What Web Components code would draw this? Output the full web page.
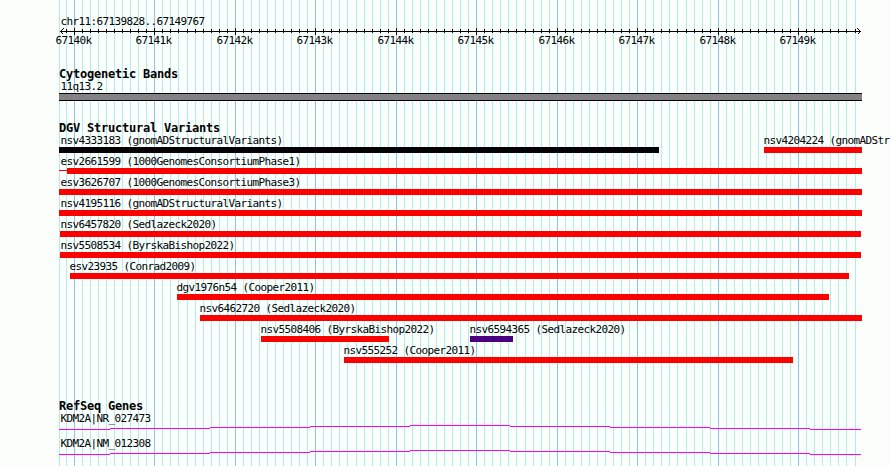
<!DOCTYPE html>
<html lang="en">
<head>
<meta charset="utf-8">
<title>chr11:67139828..67149767</title>
<style>
  html, body { margin: 0; padding: 0; background: #fcfefc; }
</style>
</head>
<body>
<genome-browser></genome-browser>

<script>
const START = 67139828;
const STOP = 67149767;
const PAD = 60;
const WIDTH = 800;
const toPx = bp => Math.round(PAD + (bp - START) * WIDTH / (STOP - START + 1));

// every 100 bp, major each 1000 bp
const TICKS = [];
for (let bp = Math.ceil(START / 100) * 100; bp <= STOP; bp += 100) {
  TICKS.push({ bp, x: toPx(bp), major: bp % 1000 === 0 });
}

class GridLines extends HTMLElement {
  constructor() {
    super();
    this.attachShadow({ mode: 'open' });
    const lines = TICKS.map(t =>
      `<rect x="${t.x}" y="0" width="1" height="466" fill="${t.major ? '#84caec' : '#acf0ec'}"/>`).join('');
    this.shadowRoot.innerHTML = `
      <style>
        :host { display: block; }
        svg { display: block; }
      </style>
      <svg width="890" height="466" shape-rendering="crispEdges">
        <rect x="59" y="0" width="1" height="466" fill="#acf0ec"/>${lines}
      </svg>
    `;
  }
}
customElements.define('grid-lines', GridLines);

class ScaleRuler extends HTMLElement {
  constructor() {
    super();
    this.attachShadow({ mode: 'open' });
    const ticks = TICKS.map(t => t.major
      ? `<rect x="${t.x}" y="0" width="1" height="7"/>`
      : `<rect x="${t.x}" y="1" width="1" height="4"/>`).join('');
    const labels = TICKS.filter(t => t.major).map(t =>
      `<span style="margin-left:${t.x - 18.5}px">${t.bp / 1000}k</span>`).join('');
    this.shadowRoot.innerHTML = `
      <style>
        :host { display: block; height: 68px; }
        .region { padding: 14px 0 0 60.5px; height: 14px; line-height: 16px; }
        svg { display: block; }
        .labels { display: grid; height: 12px; line-height: 12px; }
        .labels span { grid-area: 1 / 1; }
      </style>
      <div class="region"><slot></slot></div>
      <svg width="890" height="7" shape-rendering="crispEdges">
        <rect x="60" y="3" width="801" height="1"/>${ticks}
        <path d="M63.5 0.5L60.5 3.5L63.5 6.5M857.5 0.5L860.5 3.5L857.5 6.5" fill="none" stroke="#000"/>
      </svg>
      <div class="labels">${labels}</div>
    `;
  }
}
customElements.define('scale-ruler', ScaleRuler);

class TrackPanel extends HTMLElement {
  constructor() {
    super();
    this.attachShadow({ mode: 'open' });
    this.shadowRoot.innerHTML = `
      <style>
        :host { display: block; }
        h2 {
          margin: 0;
          padding-left: 59px;
          height: 10px;
          font-size: 12px;
          line-height: 12px;
          letter-spacing: -0.224px;
        }
      </style>
      <h2>${this.getAttribute('name')}</h2>
      <slot></slot>
    `;
  }
}
customElements.define('track-panel', TrackPanel);

class TrackRow extends HTMLElement {
  constructor() {
    super();
    this.attachShadow({ mode: 'open' });
    this.shadowRoot.innerHTML = `
      <style>
        :host { display: grid; height: 21px; }
        ::slotted(*) { grid-area: 1 / 1; }
      </style>
      <slot></slot>
    `;
  }
}
customElements.define('track-row', TrackRow);

class VariantFeature extends HTMLElement {
  constructor() {
    super();
    this.attachShadow({ mode: 'open' });
    const from = Number(this.getAttribute('from'));
    const to = Number(this.getAttribute('to'));
    const lead = Number(this.getAttribute('lead') || 0);
    const color = this.getAttribute('color') || '#ff0000';
    const labelX = from - lead > 60 ? from - 0.5 : 60.5;
    this.shadowRoot.innerHTML = `
      <style>
        :host { display: block; }
        .label { margin-left: ${labelX}px; height: 15px; line-height: 17px; white-space: nowrap; }
        .bar { display: flex; align-items: center; margin-left: ${from - lead}px; height: 6px; }
        .lead { width: ${lead}px; height: 1px; margin-bottom: 1px; background: ${color}; }
        .body { width: ${to - from}px; height: 6px; background: ${color}; }
      </style>
      <div class="label"><slot></slot></div>
      <div class="bar"><div class="lead"></div><div class="body"></div></div>
    `;
  }
}
customElements.define('variant-feature', VariantFeature);

class CytoBand extends HTMLElement {
  constructor() {
    super();
    this.attachShadow({ mode: 'open' });
    this.shadowRoot.innerHTML = `
      <style>
        :host { display: block; height: 44px; }
        .label { padding-left: 60.5px; height: 15px; line-height: 17px; }
        .band {
          box-sizing: border-box;
          width: 803px;
          height: 8px;
          margin-left: 59px;
          background: #848284;
          border: solid #000;
          border-width: 1px 0;
        }
      </style>
      <div class="label"><slot></slot></div>
      <div class="band"></div>
    `;
  }
}
customElements.define('cyto-band', CytoBand);

class GeneIntron extends HTMLElement {
  constructor() {
    super();
    this.attachShadow({ mode: 'open' });
    // shallow hat, one pixel step every 100px
    const path = 'M59 4.5H110M110 3.5H210M210 2.5H310M310 1.5H410M410 0.5H510M510 1.5H610M610 2.5H710M710 3.5H810M810 4.5H861';
    this.shadowRoot.innerHTML = `
      <style>
        :host { display: block; height: 25px; }
        .label { padding-left: 60.5px; height: 15px; line-height: 17px; }
        svg { display: block; }
      </style>
      <div class="label"><slot></slot></div>
      <svg width="890" height="5" shape-rendering="crispEdges">
        <path d="${path}" fill="none" stroke="#ff00ff"/>
      </svg>
    `;
  }
}
customElements.define('gene-intron', GeneIntron);

class GenomeBrowser extends HTMLElement {
  constructor() {
    super();
    this.attachShadow({ mode: 'open' });
    this.shadowRoot.innerHTML = `
      <style>
        :host {
          display: grid;
          width: 890px;
          height: 466px;
          overflow: hidden;
          color: #000;
          background: #fcfefc;
          font-family: "DejaVu Sans Mono", "Liberation Mono", monospace;
          font-size: 11px;
          letter-spacing: -0.622px;
        }
        grid-lines, .tracks { grid-area: 1 / 1; min-width: 0; }
        .variants { height: 278px; }
      </style>
      <grid-lines></grid-lines>
      <div class="tracks">
        <scale-ruler>chr11:67139828..67149767</scale-ruler>
        <track-panel name="Cytogenetic Bands">
          <cyto-band>11q13.2</cyto-band>
        </track-panel>
        <track-panel class="variants" name="DGV Structural Variants">
          <track-row>
            <variant-feature from="59" to="659" color="#040204">nsv4333183 (gnomADStructuralVariants)</variant-feature>
            <variant-feature from="764" to="862">nsv4204224 (gnomADStr</variant-feature>
          </track-row>
          <track-row><variant-feature from="67" to="862" lead="8">esv2661599 (1000GenomesConsortiumPhase1)</variant-feature></track-row>
          <track-row><variant-feature from="59" to="862">esv3626707 (1000GenomesConsortiumPhase3)</variant-feature></track-row>
          <track-row><variant-feature from="59" to="862">nsv4195116 (gnomADStructuralVariants)</variant-feature></track-row>
          <track-row><variant-feature from="60" to="861">nsv6457820 (Sedlazeck2020)</variant-feature></track-row>
          <track-row><variant-feature from="60" to="861">nsv5508534 (ByrskaBishop2022)</variant-feature></track-row>
          <track-row><variant-feature from="70" to="849">esv23935 (Conrad2009)</variant-feature></track-row>
          <track-row><variant-feature from="177" to="829">dgv1976n54 (Cooper2011)</variant-feature></track-row>
          <track-row><variant-feature from="200" to="862">nsv6462720 (Sedlazeck2020)</variant-feature></track-row>
          <track-row>
            <variant-feature from="261" to="389">nsv5508406 (ByrskaBishop2022)</variant-feature>
            <variant-feature from="470" to="513" color="#4b0082">nsv6594365 (Sedlazeck2020)</variant-feature>
          </track-row>
          <track-row><variant-feature from="344" to="793">nsv555252 (Cooper2011)</variant-feature></track-row>
        </track-panel>
        <track-panel name="RefSeq Genes">
          <gene-intron>KDM2A|NR_027473</gene-intron>
          <gene-intron>KDM2A|NM_012308</gene-intron>
        </track-panel>
      </div>
    `;
  }
}
customElements.define('genome-browser', GenomeBrowser);
</script>
</body>
</html>
